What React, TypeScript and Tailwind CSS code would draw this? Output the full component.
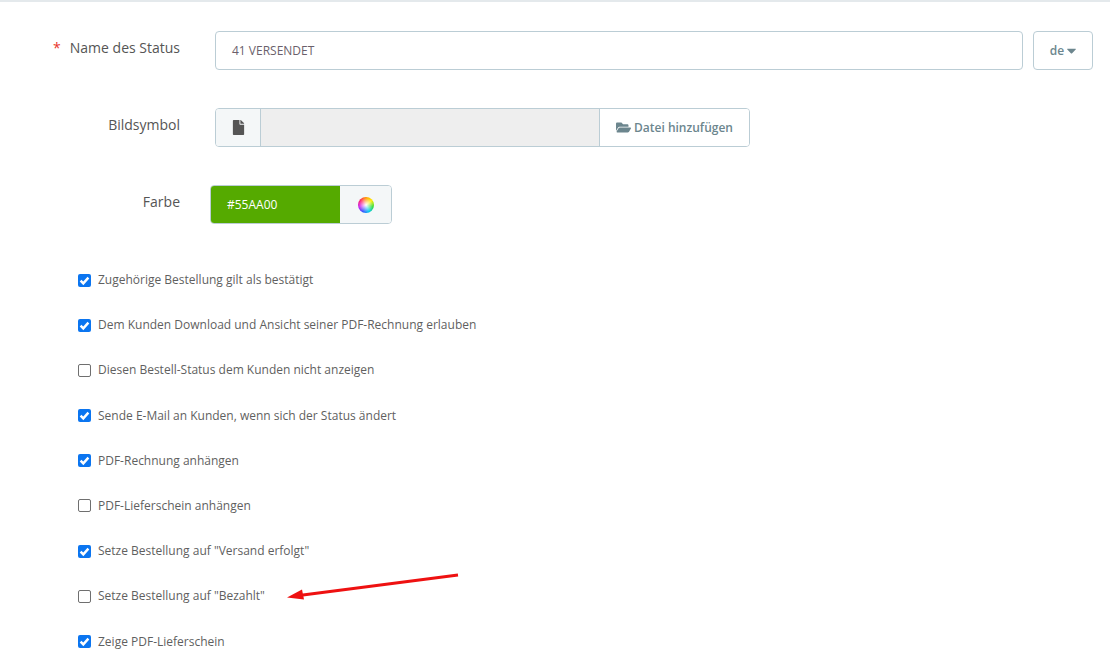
import React from 'react';
import { FaCaretDown, FaFile, FaFolderOpen } from 'react-icons/fa';

const options = [
  { label: 'Zugehörige Bestellung gilt als bestätigt', checked: true },
  { label: 'Dem Kunden Download und Ansicht seiner PDF-Rechnung erlauben', checked: true },
  { label: 'Diesen Bestell-Status dem Kunden nicht anzeigen', checked: false },
  { label: 'Sende E-Mail an Kunden, wenn sich der Status ändert', checked: true },
  { label: 'PDF-Rechnung anhängen', checked: true },
  { label: 'PDF-Lieferschein anhängen', checked: false },
  { label: 'Setze Bestellung auf "Versand erfolgt"', checked: true },
  { label: 'Setze Bestellung auf "Bezahlt"', checked: false },
  { label: 'Zeige PDF-Lieferschein', checked: true },
];

function CheckRow({ label, checked }: { label: string; checked: boolean }) {
  return (
    <div className="flex h-[18px] items-center gap-[7px] text-xs text-[#5f5f5f]">
      {checked ? (
        <span className="flex h-[13px] w-[13px] items-center justify-center rounded-[2px] bg-[#0b75f0]">
          <svg viewBox="0 0 13 13" className="h-[13px] w-[13px]">
            <path d="M2.6 6.6 5.3 9.4 10.4 3.6" fill="none" stroke="#fff" strokeWidth="2.4" />
          </svg>
        </span>
      ) : (
        <span className="h-[13px] w-[13px] rounded-[2px] border border-[#6f6f6f] bg-white" />
      )}
      <span>{label}</span>
    </div>
  );
}

function Label({ children, required }: { children: React.ReactNode; required?: boolean }) {
  return (
    <div className="w-[180px] shrink-0 pb-[5px] text-right text-sm leading-5 text-[#555]">
      {required && <span className="mr-[9px] text-[#e8352b]">*</span>}
      {children}
    </div>
  );
}

export default function App() {
  return (
    <div className="relative h-[666px] w-[1110px] overflow-hidden border-t-2 border-[#e4e9ec] bg-white font-['Open_Sans',sans-serif]">
      <div className="flex flex-col pt-[29px]">
        <div className="flex h-[39px] items-center">
          <Label required>Name des Status</Label>
          <div className="ml-[35px] flex h-full w-[808px] items-center rounded border border-[#bbcdd5] bg-white pl-4 text-xs text-[#6b5f6b]">
            41 VERSENDET
          </div>
          <div className="ml-[10px] flex h-full w-[60px] items-center justify-center rounded border border-[#bbcdd5] pl-[3px] text-xs font-semibold text-[#6c868e]">
            de <FaCaretDown className="text-[15px]" />
          </div>
        </div>

        <div className="mt-[38px] flex h-[39px] items-center">
          <Label>Bildsymbol</Label>
          <div className="ml-[35px] flex h-full w-[535px] overflow-hidden rounded border border-[#bbcdd5]">
            <div className="flex w-[45px] items-center justify-center border-r border-[#bbcdd5] bg-[#f4f7f8] text-[#555]">
              <FaFile className="text-[15px]" />
            </div>
            <div className="flex-1 bg-[#eeeeee]" />
            <div className="flex w-[150px] items-center justify-center gap-[3px] border-l border-[#bbcdd5] bg-white text-xs font-semibold text-[#6c868e]">
              <FaFolderOpen className="text-[15px]" /> Datei hinzufügen
            </div>
          </div>
        </div>

        <div className="mt-[38px] flex h-[39px] items-center">
          <Label>Farbe</Label>
          <div className="ml-[30px] flex h-full w-[182px] overflow-hidden rounded border border-[#bbcdd5]">
            <div className="flex w-[129px] items-center bg-[#55aa00] pl-4 text-xs font-medium text-white">
              #55AA00
            </div>
            <div className="flex flex-1 items-center justify-center bg-[#f4f7f8]">
              <span className="h-4 w-4 rounded-full bg-[radial-gradient(circle,#ffffff_0%,#ffffff00_65%),conic-gradient(#ff9a00,#ffee00,#33dd33,#00ccee,#3355ff,#cc22ee,#ff2266,#ff9a00)]" />
            </div>
          </div>
        </div>

        <div className="mt-[47px] flex flex-col gap-[27.2px] pl-[78px]">
          {options.map((o) => (
            <CheckRow key={o.label} label={o.label} checked={o.checked} />
          ))}
        </div>
      </div>

      {/* annotation arrow */}
      <svg className="absolute left-[280px] top-[568px]" width="185" height="35" viewBox="0 0 185 35">
        <path d="M178 5 19 25.5" stroke="#ee1111" strokeWidth="3" fill="none" />
        <path d="M7 27.5 22 19.5 24 29.5Z" fill="#ee1111" />
      </svg>
    </div>
  );
}
